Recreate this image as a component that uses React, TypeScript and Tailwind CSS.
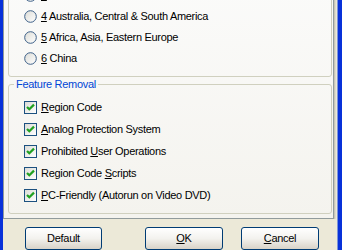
import React from "react";

const font = { fontFamily: '"Liberation Sans", Arial, sans-serif' };

function Radio() {
  return (
    <svg width="13" height="13" viewBox="0 0 13 13" className="shrink-0">
      <defs>
        <linearGradient id="rg" x1="0" y1="0" x2="1" y2="1">
          <stop offset="0" stopColor="#dcdcd6" />
          <stop offset="1" stopColor="#ffffff" />
        </linearGradient>
      </defs>
      <circle cx="6.5" cy="6.5" r="5.8" fill="url(#rg)" stroke="#3d6088" strokeWidth="1" />
    </svg>
  );
}

function Check() {
  return (
    <div className="w-[13px] h-[13px] shrink-0 border border-[#1c5180] bg-gradient-to-br from-[#dcdcd7] to-white flex items-center justify-center">
      <svg width="11" height="11" viewBox="0 0 11 11">
        <path d="M2 5 L4.3 7.3 L9 2.6" fill="none" stroke="#21a121" strokeWidth="2.2" />
      </svg>
    </div>
  );
}

function RadioRow({ k, rest }: { k: string; rest: string }) {
  return (
    <div className="h-[21px] flex items-center gap-[4px] pl-[15px]">
      <Radio />
      <span>
        <u>{k}</u>
        {rest}
      </span>
    </div>
  );
}

function CheckRow({ pre, k, rest }: { pre?: string; k: string; rest: string }) {
  return (
    <div className="h-[22px] flex items-center gap-[4px] pl-[15px]">
      <Check />
      <span>
        {pre}
        <u>{k}</u>
        {rest}
      </span>
    </div>
  );
}

function Btn({ children, className }: { children: React.ReactNode; className?: string }) {
  return (
    <div
      className={
        "w-[77px] h-[23px] shrink-0 rounded-[3px] border border-[#003c74] bg-gradient-to-b from-white via-[#f3f2ee] to-[#d8d3c8] flex items-center justify-center " +
        (className ?? "")
      }
    >
      {children}
    </div>
  );
}

export default function App() {
  return (
    <div className="w-[342px] h-[250px] overflow-hidden flex text-[11px] tracking-[-0.3px] text-black bg-[#ece9d8]" style={font}>
      <div className="w-[3px] shrink-0 bg-[#0831d9]" />
      <div className="flex-1 flex flex-col">
        <div className="-mt-[16px] w-[331px] border-l border-r border-b border-[#919b9c] bg-gradient-to-b from-[#fbfbfa] to-[#f4f3ee] pl-[4px] pr-[1px] pb-[4px] shadow-[1px_0_0_#c9c6b8,2px_0_0_#dedbcb]">
          <div className="w-[324px] rounded-[3px] border border-[#d0d0bf] pb-[7px]">
            <RadioRow k="3" rest=" Southeast Asia" />
            <RadioRow k="4" rest=" Australia, Central & South America" />
            <RadioRow k="5" rest=" Africa, Asia, Eastern Europe" />
            <RadioRow k="6" rest=" China" />
          </div>
          <fieldset className="w-[324px] mt-[1px] rounded-[3px] border border-[#d0d0bf] pb-[7px]">
            <legend className="ml-[5px] px-[2px] leading-[13px] text-[#0046d5]">Feature Removal</legend>
            <div className="mt-[5px]">
              <CheckRow k="R" rest="egion Code" />
              <CheckRow k="A" rest="nalog Protection System" />
              <CheckRow pre="Prohibited " k="U" rest="ser Operations" />
              <CheckRow pre="Region Code " k="S" rest="cripts" />
              <CheckRow k="P" rest="C-Friendly (Autorun on Video DVD)" />
            </div>
          </fieldset>
        </div>
        <div className="mt-[8px] flex pl-[22px]">
          <Btn>Default</Btn>
          <Btn className="ml-[43px] w-[78px]">
            <span>
              <u>O</u>K
            </span>
          </Btn>
          <Btn className="ml-[18px] w-[78px]">
            <span>
              <u>C</u>ancel
            </span>
          </Btn>
        </div>
      </div>
      <div className="w-[5px] shrink-0 flex">
        <div className="w-[1px] bg-[#7d94d8]" />
        <div className="flex-1 bg-[#0831d9]" />
      </div>
    </div>
  );
}
